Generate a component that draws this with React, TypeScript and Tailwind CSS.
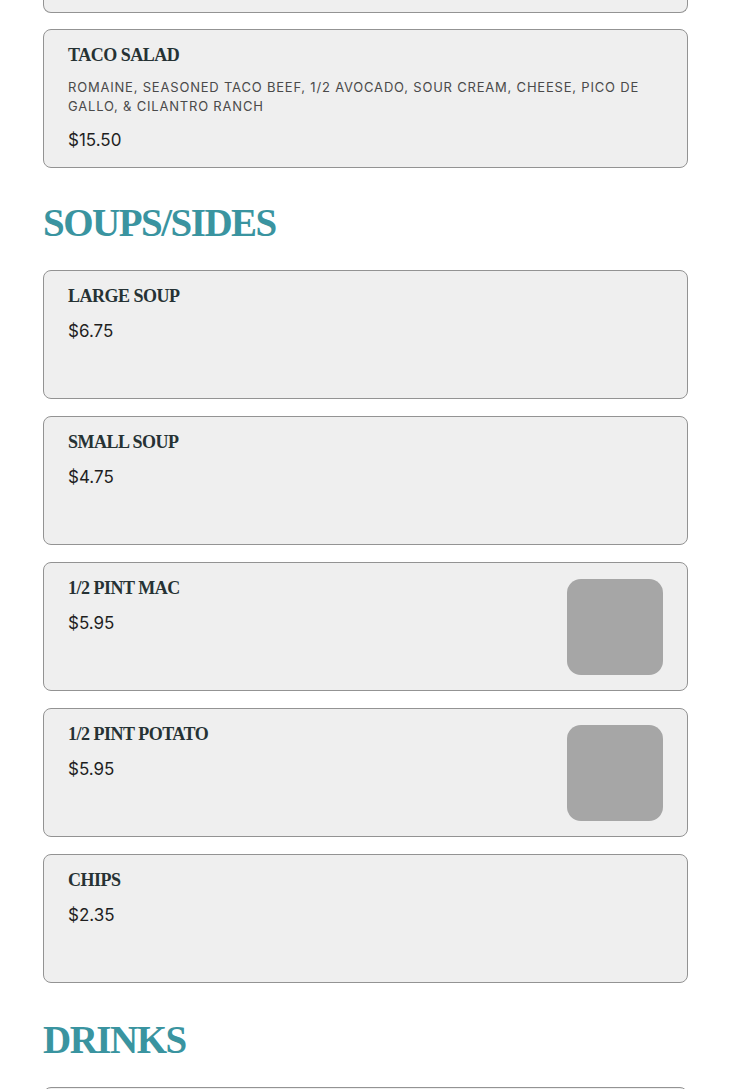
type Item = { name: string; price: string; desc?: string; image?: boolean };

const soups: Item[] = [
  { name: 'LARGE SOUP', price: '$6.75' },
  { name: 'SMALL SOUP', price: '$4.75' },
  { name: '1/2 PINT MAC', price: '$5.95', image: true },
  { name: '1/2 PINT POTATO', price: '$5.95', image: true },
  { name: 'CHIPS', price: '$2.35' },
];

const serif = "font-['Liberation_Serif',serif]";

function Card({ item, fixed = true }: { item: Item; fixed?: boolean }) {
  return (
    <div
      className={`flex items-center justify-between rounded-[8px] border border-[#939393] bg-[#efefef] pl-6 pr-6 ${
        fixed ? 'h-[129px]' : ''
      }`}
    >
      <div className="flex flex-col gap-3 self-start pt-[14px] pb-[15px]">
        <div className={`${serif} text-[18px] font-bold leading-[22px] tracking-[-0.5px] text-[#263234]`}>
          {item.name}
        </div>
        {item.desc && (
          <div className="font-['Inter',sans-serif] text-[13px] leading-[19px] tracking-[0.8px] text-[#4a4a4a] pr-4">
            {item.desc}
          </div>
        )}
        <div className="font-['Inter',sans-serif] text-[17px] leading-[24px] text-[#1f1f1f]">{item.price}</div>
      </div>
      {item.image && <div className="h-24 w-24 shrink-0 rounded-[14px] bg-[#a6a6a6]" />}
    </div>
  );
}

function Heading({ children }: { children: string }) {
  return (
    <h2
      className={`${serif} mt-[31px] mb-[23px] text-[39px] font-bold leading-[48px] tracking-[-1.5px] text-[#3a94a0]`}
    >
      {children}
    </h2>
  );
}

export default function App() {
  return (
    <div className="min-h-screen bg-white">
      <div className="ml-[43px] w-[645px]">
        {/* tail of the previous card */}
        <div className="h-[13px] rounded-b-[8px] border border-t-0 border-[#939393] bg-[#efefef]" />
        <div className="mt-[16px]">
          <Card
            fixed={false}
            item={{
              name: 'TACO SALAD',
              price: '$15.50',
              desc: 'ROMAINE, SEASONED TACO BEEF, 1/2 AVOCADO, SOUR CREAM, CHEESE, PICO DE GALLO, & CILANTRO RANCH',
            }}
          />
        </div>

        <Heading>SOUPS/SIDES</Heading>
        <div className="flex flex-col gap-[17px]">
          {soups.map((s) => (
            <Card key={s.name} item={s} />
          ))}
        </div>

        <div className="pt-[2px]">
          <Heading>DRINKS</Heading>
        </div>
        {/* first drinks card, only its top edge is in view */}
        <div className="h-[129px] rounded-[8px] border border-[#939393] bg-[#efefef]" />
      </div>
    </div>
  );
}
